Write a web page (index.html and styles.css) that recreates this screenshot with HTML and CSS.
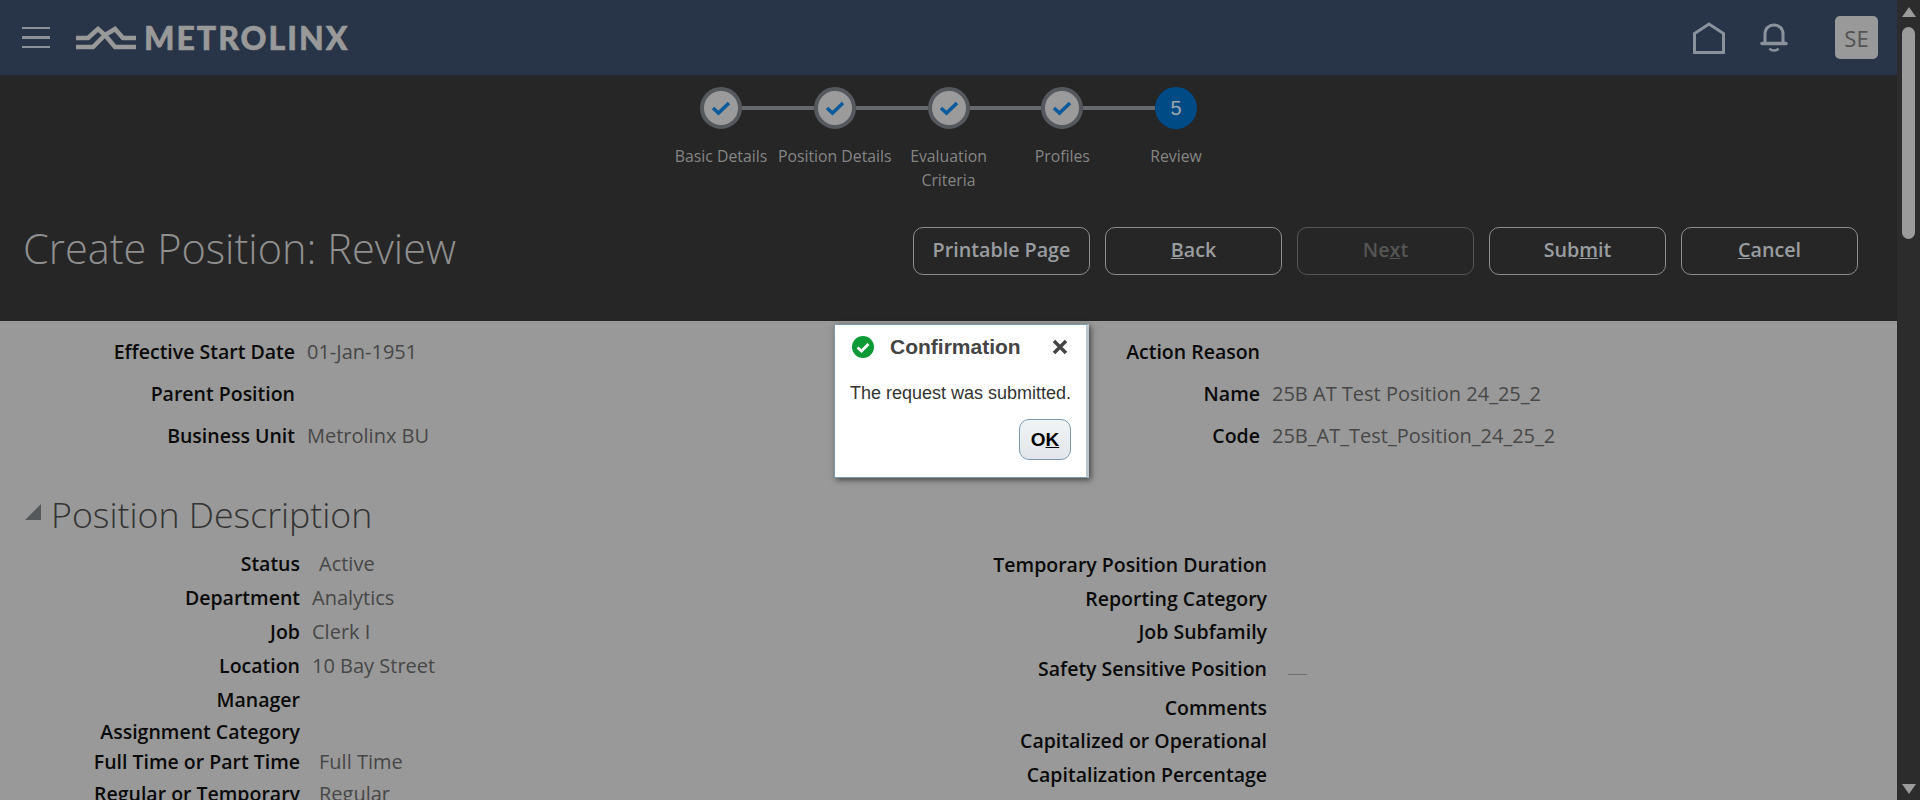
FILE: index.html
```html
<!DOCTYPE html>
<html lang="en">
<head>
    <meta charset="UTF-8">
    <title>Create Position: Review</title>
    <link rel="stylesheet" href="styles.css">
</head>
<body>
    <div class="page">
        <div class="main">
            <header class="topbar">
                <div class="burger"><span></span><span></span><span></span></div>
                <div class="logo">
                    <svg class="logo-mark" width="60" height="24" viewBox="0 0 60 24">
                        <path d="M0 12H12L22 3L29 9L39 21H60" fill="none" stroke="#999" stroke-width="4.5"/>
                        <path d="M0 21H17L29 9L39 3L47 12H60" fill="none" stroke="#999" stroke-width="4.5"/>
                    </svg>
                    <span class="logo-text">METROLINX</span>
                </div>
                <div class="topbar-right">
                    <svg class="home-icon" width="34" height="32" viewBox="0 0 34 32">
                        <path d="M2.500 30.500V11.500L17 2L31.500 11.500V30.500Z" fill="none" stroke="#8a929c" stroke-width="3"/>
                    </svg>
                    <svg class="bell-icon" width="28" height="30" viewBox="0 0 28 30">
                        <path d="M5 20V11C5 5.500 9 2 14 2S23 5.500 23 11V20" fill="none" stroke="#8a929c" stroke-width="3"/>
                        <path d="M2 20.500H26" stroke="#8a929c" stroke-width="3.500" stroke-linecap="round"/>
                        <path d="M9.500 25.500C11.500 28.300 16.500 28.300 18.500 25.500" fill="none" stroke="#8a929c" stroke-width="2.500"/>
                    </svg>
                    <div class="avatar">SE</div>
                </div>
            </header>

            <section class="train">
                <div class="steps">
                    <div class="step done">
                        <div class="track"><div class="dot"><svg width="20" height="16" viewBox="0 0 20 16"><path d="M2 8L7.500 13L18 3" fill="none" stroke="#0a5a9c" stroke-width="3.500"/></svg></div></div>
                        <div class="step-label">Basic Details</div>
                    </div>
                    <div class="step done">
                        <div class="track"><div class="dot"><svg width="20" height="16" viewBox="0 0 20 16"><path d="M2 8L7.500 13L18 3" fill="none" stroke="#0a5a9c" stroke-width="3.500"/></svg></div></div>
                        <div class="step-label">Position Details</div>
                    </div>
                    <div class="step done">
                        <div class="track"><div class="dot"><svg width="20" height="16" viewBox="0 0 20 16"><path d="M2 8L7.500 13L18 3" fill="none" stroke="#0a5a9c" stroke-width="3.500"/></svg></div></div>
                        <div class="step-label">Evaluation Criteria</div>
                    </div>
                    <div class="step done">
                        <div class="track"><div class="dot"><svg width="20" height="16" viewBox="0 0 20 16"><path d="M2 8L7.500 13L18 3" fill="none" stroke="#0a5a9c" stroke-width="3.500"/></svg></div></div>
                        <div class="step-label">Profiles</div>
                    </div>
                    <div class="step current">
                        <div class="track"><div class="dot">5</div></div>
                        <div class="step-label">Review</div>
                    </div>
                </div>

                <div class="title-row">
                    <h1>Create Position: Review</h1>
                    <div class="actions">
                        <button>Printable Page</button>
                        <button><u>B</u>ack</button>
                        <button class="disabled">Ne<u>x</u>t</button>
                        <button>Sub<u>m</u>it</button>
                        <button><u>C</u>ancel</button>
                    </div>
                </div>
            </section>

            <section class="content">
                <div class="two-col">
                    <dl class="fields summary">
                        <dt>Effective Start Date</dt><dd>01-Jan-1951</dd>
                        <dt>Parent Position</dt><dd></dd>
                        <dt>Business Unit</dt><dd>Metrolinx BU</dd>
                    </dl>
                    <dl class="fields summary summary-right">
                        <dt>Action Reason</dt><dd></dd>
                        <dt>Name</dt><dd>25B AT Test Position 24_25_2</dd>
                        <dt>Code</dt><dd>25B_AT_Test_Position_24_25_2</dd>
                    </dl>
                </div>

                <div class="section-head">
                    <span class="disclosure"></span>
                    <h2>Position Description</h2>
                </div>

                <div class="two-col">
                    <dl class="fields desc-left">
                        <dt>Status</dt><dd class="indent">Active</dd>
                        <dt>Department</dt><dd>Analytics</dd>
                        <dt>Job</dt><dd>Clerk I</dd>
                        <dt>Location</dt><dd>10 Bay Street</dd>
                        <dt>Manager</dt><dd></dd>
                        <dt>Assignment Category</dt><dd></dd>
                        <dt>Full Time or Part Time</dt><dd class="indent">Full Time</dd>
                        <dt>Regular or Temporary</dt><dd class="indent">Regular</dd>
                    </dl>
                    <dl class="fields desc-right">
                        <dt>Temporary Position Duration</dt><dd></dd>
                        <dt>Reporting Category</dt><dd></dd>
                        <dt>Job Subfamily</dt><dd></dd>
                        <dt>Safety Sensitive Position</dt><dd><span class="dash"></span></dd>
                        <dt>Comments</dt><dd></dd>
                        <dt>Capitalized or Operational</dt><dd></dd>
                        <dt>Capitalization Percentage</dt><dd></dd>
                        <dt>Adjusted Disabled</dt><dd></dd>
                    </dl>
                </div>
            </section>
        </div>

        <div class="scrollbar">
            <span class="arrow-up"></span>
            <span class="thumb"></span>
            <span class="arrow-down"></span>
        </div>

        <div class="dialog">
            <div class="dialog-head">
                <svg width="22" height="22" viewBox="0 0 22 22">
                    <circle cx="11" cy="11" r="11" fill="#0d9a36"/>
                    <path d="M5.500 11.500L9.500 15L16.500 8" fill="none" stroke="#fff" stroke-width="2.800"/>
                </svg>
                <span class="dialog-title">Confirmation</span>
                <svg class="dialog-close" width="16" height="16" viewBox="0 0 16 16">
                    <path d="M2 2L14 14M14 2L2 14" stroke="#444" stroke-width="3.500"/>
                </svg>
            </div>
            <p class="dialog-text">The request was submitted.</p>
            <div class="dialog-foot">
                <button class="ok-btn">O<u>K</u></button>
            </div>
        </div>
    </div>
</body>
</html>
```

FILE: styles.css
```css
* {
    box-sizing: border-box;
}

body {
    margin: 0;
    font-family: "Open Sans", "Noto Sans", sans-serif;
    background-color: #999999;
}

.page {
    position: relative;
    display: flex;
    height: 800px;
    overflow: hidden;
}

.main {
    flex: 1;
    display: flex;
    flex-direction: column;
    min-width: 0;
}

/* top bar */
.topbar {
    height: 75px;
    background-color: #283548;
    display: flex;
    align-items: center;
    padding: 0 19px 0 22px;
}

.burger {
    width: 28px;
    display: flex;
    flex-direction: column;
    gap: 7px;
}

.burger span {
    height: 2.500px;
    background-color: #8b9099;
}

.logo {
    display: flex;
    align-items: center;
    gap: 8px;
    margin-left: 26px;
}

.logo-text {
    font-family: "Lato", sans-serif;
    font-weight: 900;
    font-size: 32px;
    line-height: 32px;
    letter-spacing: 2px;
    color: #999999;
    -webkit-text-stroke: 0.6px #999999;
}

.topbar-right {
    margin-left: auto;
    display: flex;
    align-items: center;
}

.bell-icon {
    margin-left: 34px;
}

.avatar {
    width: 43px;
    height: 43px;
    margin-left: 47px;
    border-radius: 5px;
    background-color: #999999;
    color: #555555;
    font-family: "Noto Sans", sans-serif;
    font-size: 22px;
    display: flex;
    align-items: center;
    justify-content: center;
}

/* train and title band */
.train {
    background-color: #262626;
    padding: 12px 39px 46px 23px;
}

.steps {
    display: flex;
    justify-content: center;
    margin-left: -23px;
    margin-right: -39px;
}

.step {
    width: 113.750px;
    text-align: center;
}

.track {
    display: flex;
    align-items: center;
}

.track::before,
.track::after {
    content: '';
    flex: 1;
    height: 4px;
    background-color: #666a6e;
}

.step:first-child .track::before,
.step:last-child .track::after {
    background-color: transparent;
}

.dot {
    width: 42px;
    height: 42px;
    border-radius: 50%;
    display: flex;
    align-items: center;
    justify-content: center;
}

.done .dot {
    background-color: #9b9b9b;
    border: 4px solid #55595d;
}

.current .dot {
    background-color: #004a86;
    color: #9fa6ad;
    font-family: "Liberation Sans", sans-serif;
    font-size: 20px;
}

.step-label {
    margin: 15px auto 0;
    font-size: 15.800px;
    line-height: 24px;
    color: #858585;
    width: 100px;
    white-space: nowrap;
    display: flex;
    justify-content: center;
}

.step:nth-child(3) .step-label {
    white-space: normal;
    display: block;
}

.title-row {
    display: flex;
    align-items: flex-start;
    justify-content: space-between;
    margin-top: 35px;
}

h1 {
    margin: 0;
    font-weight: 300;
    font-size: 41.500px;
    line-height: 42px;
    color: #8f8f8f;
}

.actions {
    display: flex;
    gap: 15px;
}

.actions button {
    width: 177px;
    height: 48px;
    padding-bottom: 4px;
    border: 1px solid #8c8c8c;
    border-radius: 10px;
    background: transparent;
    font-family: "Open Sans", sans-serif;
    font-weight: 600;
    font-size: 19.700px;
    color: #9a9da0;
}

.actions .disabled {
    border-color: #555555;
    color: #555555;
}

/* page content */
.content {
    flex: 1;
    overflow: hidden;
    background-color: #999999;
    padding-top: 9px;
}

.two-col {
    display: grid;
    grid-template-columns: 948px 1fr;
}

.fields {
    margin: 0;
    display: grid;
    align-items: center;
    column-gap: 12px;
    font-size: 20px;
}

.fields dt {
    text-align: right;
    font-size: 19.500px;
    font-weight: 600;
    color: #0a0a0a;
    white-space: nowrap;
}

.fields dd {
    margin: 0;
    color: #474747;
    white-space: nowrap;
}

.summary {
    grid-template-columns: 295px 1fr;
    grid-auto-rows: 42px;
}

.summary-right {
    grid-template-columns: 312px 1fr;
}

.section-head {
    display: flex;
    align-items: center;
    height: 52px;
    margin-top: 34px;
    padding-bottom: 4px;
    padding-left: 25px;
}

.disclosure {
    width: 0;
    height: 0;
    margin-bottom: 5px;
    border-left: 16px solid transparent;
    border-bottom: 16px solid #55595c;
}

h2 {
    margin: 0 0 0 10px;
    font-weight: 300;
    font-size: 35.700px;
    color: #333333;
}

.desc-left {
    margin-top: 4px;
    grid-template-columns: 300px 1fr;
    grid-template-rows: 34px 34px 34px 34px 34px 30px 30px 34px;
}

.desc-right {
    margin-top: 3px;
    grid-template-columns: 319px 1fr;
    grid-template-rows: 38px 30px 36px 39px 38px 28px 40px 26px;
    column-gap: 21px;
}

.fields .indent {
    padding-left: 7px;
}

.dash {
    display: block;
    width: 19px;
    height: 1px;
    margin-top: 12px;
    background-color: #6e6e6e;
}

/* scrollbar */
.scrollbar {
    width: 23px;
    background-color: #2c2c2c;
    display: flex;
    flex-direction: column;
    align-items: center;
}

.arrow-up,
.arrow-down {
    width: 0;
    height: 0;
    border-left: 7.500px solid transparent;
    border-right: 7.500px solid transparent;
}

.arrow-up {
    margin-top: 7px;
    border-bottom: 10px solid #9b9b9b;
}

.thumb {
    width: 13px;
    height: 212px;
    margin-top: 10px;
    border-radius: 7px;
    background-color: #9b9b9b;
}

.arrow-down {
    margin-top: auto;
    margin-bottom: 6px;
    border-top: 10px solid #9b9b9b;
}

/* confirmation dialog, sits over the page */
.dialog {
    position: absolute;
    left: 834px;
    top: 324px;
    width: 255px;
    height: 154px;
    padding: 0 15px;
    background-color: #ffffff;
    border: 1px solid #7c9ab0;
    border-right: 3px solid #b9c6d0;
    box-shadow: 2px 2px 6px rgba(0, 0, 0, 0.55);
    font-family: "Liberation Sans", Arial, sans-serif;
}

.dialog-head {
    display: flex;
    align-items: center;
    height: 43px;
    padding: 0 3px 0 2px;
}

.dialog-title {
    margin-left: 16px;
    font-weight: bold;
    font-size: 21px;
    color: #444444;
}

.dialog-close {
    margin-left: auto;
}

.dialog-text {
    margin: 15px 0 0;
    font-size: 18px;
    line-height: 21px;
    white-space: nowrap;
    color: #333333;
}

.dialog-foot {
    display: flex;
    justify-content: flex-end;
    margin-top: 15px;
}

.ok-btn {
    width: 52px;
    height: 41px;
    padding: 0;
    border: 1px solid #7d9ab0;
    border-radius: 10px;
    background: linear-gradient(#f1f4f6, #e2e6ea);
    font-family: "Liberation Sans", Arial, sans-serif;
    font-weight: bold;
    font-size: 19px;
    color: #000000;
}
```
